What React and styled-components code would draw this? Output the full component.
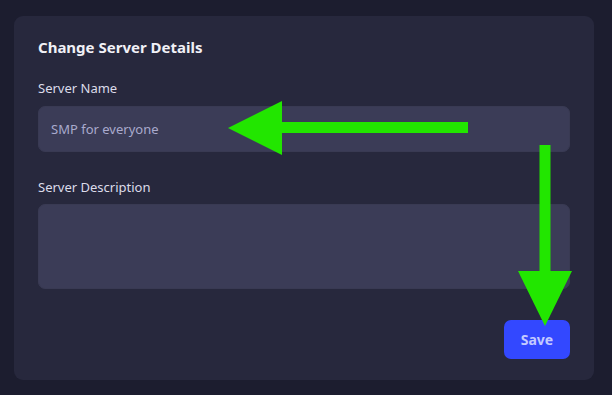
import React from 'react'
import styled, { createGlobalStyle } from 'styled-components'

const Global = createGlobalStyle`
  html, body {
    margin: 0;
    background: #1c1d2f;
    font-family: "Noto Sans", "Open Sans", sans-serif;
  }
  * { box-sizing: border-box; }
`

const Page = styled.div`
  position: relative;
  width: 612px;
  height: 395px;
  padding: 16px 18px 15px 14px;
`

const Card = styled.div`
  background: #27283d;
  border-radius: 9px;
  height: 364px;
  padding: 21px 24px 21px 24px;
  display: flex;
  flex-direction: column;
`

const Title = styled.h2`
  margin: 0 0 22px;
  font-size: 15px;
  line-height: 20px;
  font-weight: 700;
  color: #f0f0f6;
`

const Label = styled.label`
  display: block;
  font-size: 13px;
  line-height: 18px;
  color: #dcdcea;
  margin-bottom: ${p => p.gap}px;
`

const Field = styled.input`
  display: block;
  width: 100%;
  height: 46px;
  margin: 0 0 26px;
  padding: 0 12px;
  background: #3b3c57;
  border: 1px solid #393a53;
  border-radius: 7px;
  font-family: inherit;
  font-size: 13px;
  color: #a9aacd;
  outline: none;
`

const Area = styled.textarea`
  display: block;
  width: 100%;
  height: 85px;
  margin: 0;
  padding: 10px 12px;
  background: #3b3c57;
  border: 1px solid #393a53;
  border-radius: 7px;
  font-family: inherit;
  font-size: 13px;
  color: #a9aacd;
  resize: none;
  outline: none;
`

const Footer = styled.div`
  display: flex;
  justify-content: flex-end;
  margin-top: 31px;
`

const SaveButton = styled.button`
  width: 66px;
  height: 39px;
  border: none;
  border-radius: 7px;
  background: #3348ff;
  color: #c3caff;
  font-family: inherit;
  font-size: 14px;
  font-weight: 700;
  cursor: pointer;
`

const Arrows = styled.svg`
  position: absolute;
  left: 0;
  top: 0;
  pointer-events: none;
`

export default function App() {
  return (
    <Page>
      <Global />
      <Card>
        <Title>Change Server Details</Title>
        <Label gap={9}>Server Name</Label>
        <Field defaultValue="SMP for everyone" readOnly />
        <Label gap={8}>Server Description</Label>
        <Area readOnly />
        <Footer>
          <SaveButton>Save</SaveButton>
        </Footer>
      </Card>
      <Arrows width="612" height="395" viewBox="0 0 612 395">
        <g fill="#22e600">
          <rect x="280" y="122" width="188" height="11" />
          <polygon points="228,128 282,101 282,155" />
          <rect x="539.5" y="145" width="11" height="128" />
          <polygon points="518,271 572,271 545,326" />
        </g>
      </Arrows>
    </Page>
  )
}
